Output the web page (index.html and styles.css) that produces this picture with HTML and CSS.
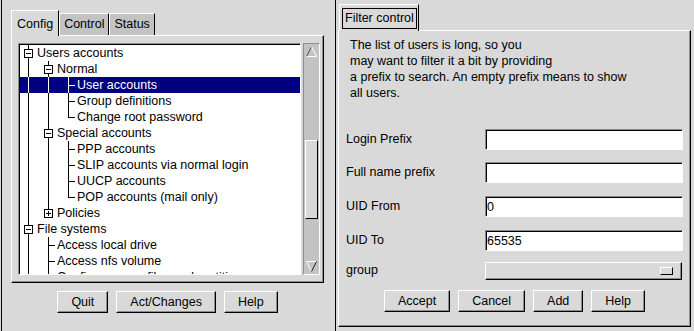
FILE: index.html
```html
<!DOCTYPE html>
<html>
<head>
<meta charset="utf-8">
<title>User accounts</title>
<link rel="stylesheet" href="styles.css">
</head>
<body>
<div class="app">
	<div class="left">
		<div class="tabs">
			<div class="tab active">Config</div>
			<div class="tab">Control</div>
			<div class="tab">Status</div>
		</div>
		<div class="nb-body">
			<div class="list">
				<div class="row"><i class="c ud"><b class="box minus"></b></i><span class="txt">Users accounts</span></div>
				<div class="row"><i class="c v"></i><i class="c ud"><b class="box minus"></b></i><span class="txt">Normal</span></div>
				<div class="row sel"><i class="c v"></i><i class="c v"></i><i class="c t"></i><span class="txt">User accounts</span></div>
				<div class="row"><i class="c v"></i><i class="c v"></i><i class="c t"></i><span class="txt">Group definitions</span></div>
				<div class="row"><i class="c v"></i><i class="c v"></i><i class="c l"></i><span class="txt">Change root password</span></div>
				<div class="row"><i class="c v"></i><i class="c ud"><b class="box minus"></b></i><span class="txt">Special accounts</span></div>
				<div class="row"><i class="c v"></i><i class="c v"></i><i class="c t"></i><span class="txt">PPP accounts</span></div>
				<div class="row"><i class="c v"></i><i class="c v"></i><i class="c t"></i><span class="txt">SLIP accounts via normal login</span></div>
				<div class="row"><i class="c v"></i><i class="c v"></i><i class="c t"></i><span class="txt">UUCP accounts</span></div>
				<div class="row"><i class="c v"></i><i class="c v"></i><i class="c l"></i><span class="txt">POP accounts (mail only)</span></div>
				<div class="row"><i class="c v"></i><i class="c u"><b class="box plus"></b></i><span class="txt">Policies</span></div>
				<div class="row"><i class="c ud"><b class="box minus"></b></i><span class="txt">File systems</span></div>
				<div class="row"><i class="c v"></i><i class="c t"></i><span class="txt">Access local drive</span></div>
				<div class="row"><i class="c v"></i><i class="c t"></i><span class="txt">Access nfs volume</span></div>
				<div class="row"><i class="c v"></i><i class="c t"></i><span class="txt">Configure swap files and partitions</span></div>
			</div>
			<div class="sb">
				<div class="arrow">
					<svg width="15" height="14" viewBox="0 0 15 14"><polyline points="2.5,12.5 7.5,2.5" fill="none" stroke="#555" stroke-width="1"/><polyline points="7.5,2.5 12.5,12.5 2.5,12.5" fill="none" stroke="#fff" stroke-width="1"/></svg>
				</div>
				<div class="trough"><div class="thumb"></div></div>
				<div class="arrow">
					<svg width="15" height="14" viewBox="0 0 15 14"><polyline points="7.5,11.5 2.5,1.5 12.5,1.5" fill="none" stroke="#fff" stroke-width="1"/><polyline points="12.5,1.5 7.5,11.5" fill="none" stroke="#222" stroke-width="1"/></svg>
				</div>
			</div>
		</div>
		<div class="btns">
			<button class="btn">Quit</button>
			<button class="btn">Act/Changes</button>
			<button class="btn">Help</button>
		</div>
	</div>

	<div class="right">
		<div class="rtab"><span class="focus">Filter control</span></div>
		<div class="rbody">
			<div class="desc">
				The list of users is long, so you<br>
				may want to filter it a bit by providing<br>
				a prefix to search. An empty prefix means to show<br>
				all users.
			</div>
			<div class="form">
				<label class="lbl">Login Prefix</label>
				<input class="field" type="text" value="">
				<label class="lbl">Full name prefix</label>
				<input class="field" type="text" value="">
				<label class="lbl">UID From</label>
				<input class="field" type="text" value="0">
				<label class="lbl">UID To</label>
				<input class="field" type="text" value="65535">
				<label class="lbl lbl-combo">group</label>
				<div class="combo"><span class="ind"></span></div>
			</div>
			<div class="btns rbtns">
				<button class="btn">Accept</button>
				<button class="btn">Cancel</button>
				<button class="btn">Add</button>
				<button class="btn">Help</button>
			</div>
		</div>
	</div>
</div>
</body>
</html>
```
FILE: styles.css
```css
body {
	margin:0;
	padding:0;
	background:#d9d9d9;
	color:#000;
	font:12.5px "Liberation Sans", Arial, sans-serif;}
.app {
	display:flex;
	width:694px;
	height:331px;
	overflow:hidden;}

/* left notebook */
.left {
	width:335px;
	margin-left:1px;
	box-sizing:border-box;
	border-left:1px solid #000;
	border-right:1px solid #000;
	padding:10px 0 0 9px;
	display:flex;
	flex-direction:column;}
.tabs {
	display:flex;
	align-items:flex-end;
	height:25px;}
.tab {
	height:22px;
	box-sizing:border-box;
	border:1px solid;
	border-color:#fff #000 transparent #fff;
	border-bottom:0;
	background:#c3c3c3;
	padding:0 4px;
	line-height:21px;
	white-space:nowrap;}
.tab.active {
	height:26px;
	margin-bottom:-1px;
	position:relative;
	z-index:1;
	padding:2px 5px 0;
	line-height:22px;
	background:#d9d9d9;}
.nb-body {
	width:313px;
	height:248px;
	box-sizing:border-box;
	border:1px solid;
	border-color:#fff #000 #000 #fff;
	box-shadow:inset -1px -1px 0 #8c8c8c;
	padding:7px 3px 7px 6px;
	display:flex;
	gap:2px;}
.list {
	flex:1;
	background:#fff;
	border:1px solid;
	border-color:#8c8c8c #fff #fff #8c8c8c;
	box-shadow:inset 1px 1px 0 #000;
	padding:1px 0 0 1px;
	overflow:hidden;}
.row {
	display:flex;
	height:16px;
	line-height:16px;
	white-space:nowrap;}
.row.sel {
	background:#000080;
	color:#fff;}
.txt {margin-left:-3px;}
.c {
	flex:none;
	width:20px;
	height:16px;
	display:flex;
	align-items:flex-start;}
.v {background:linear-gradient(currentColor,currentColor) 8px 0/1px 16px no-repeat;}
.t {background:linear-gradient(currentColor,currentColor) 8px 0/1px 16px no-repeat, linear-gradient(currentColor,currentColor) 8px 8px/7px 1px no-repeat;}
.l {background:linear-gradient(currentColor,currentColor) 8px 0/1px 9px no-repeat, linear-gradient(currentColor,currentColor) 8px 8px/7px 1px no-repeat;}
.ud {background:linear-gradient(currentColor,currentColor) 8px 0/1px 16px no-repeat;}
.u {background:linear-gradient(currentColor,currentColor) 8px 0/1px 5px no-repeat;}
.box {
	width:9px;
	height:9px;
	box-sizing:border-box;
	margin:4px 0 0 4px;
	border:1px solid #000;}
.box.minus {background:linear-gradient(#000,#000) center/5px 1px no-repeat, #fff;}
.box.plus {background:linear-gradient(#000,#000) center/5px 1px no-repeat, linear-gradient(#000,#000) center/1px 5px no-repeat, #fff;}

/* scrollbar */
.sb {
	width:17px;
	box-sizing:border-box;
	border:1px solid;
	border-color:#8c8c8c #fff #fff #8c8c8c;
	background:#c3c3c3;
	display:flex;
	flex-direction:column;}
.arrow {height:14px;}
.arrow svg {display:block;}
.trough {
	flex:1;
	padding:82px 0 0 1px;}
.thumb {
	width:13px;
	height:79px;
	box-sizing:border-box;
	background:#d9d9d9;
	border:1px solid;
	border-color:#fff #000 #000 #fff;}

/* buttons */
.btns {
	display:flex;
	justify-content:center;
	gap:8px;
	width:313px;
	margin-top:8px;}
.btn {
	height:22px;
	box-sizing:border-box;
	margin:0;
	padding:0 13px;
	border:1px solid;
	border-color:#fff #000 #000 #fff;
	box-shadow:inset -1px -1px 0 #8c8c8c;
	background:#d9d9d9;
	color:#000;
	font:inherit;
	line-height:19px;}

/* right notebook */
.right {
	margin-left:2px;
	padding-top:4px;
	display:flex;
	flex-direction:column;}
.rtab {
	width:80px;
	height:27px;
	box-sizing:border-box;
	margin:0 0 -1px 1px;
	position:relative;
	z-index:1;
	border:1px solid;
	border-color:#fff #000 transparent #fff;
	border-bottom:0;
	background:#d9d9d9;
	padding:3px 0 0 2px;}
.focus {
	display:block;
	width:75px;
	height:21px;
	box-sizing:border-box;
	border:1px solid #000;
	padding-left:2px;
	line-height:19px;
	white-space:nowrap;}
.rbody {
	width:353px;
	height:297px;
	box-sizing:border-box;
	border:1px solid;
	border-color:#fff #000 #000 #fff;
	box-shadow:inset -1px -1px 0 #8c8c8c;
	padding:6px 7px 0;}
.desc {
	padding-left:4px;
	line-height:16px;}
.form {
	display:grid;
	grid-template-columns:139px 198px;
	grid-template-rows:33px 34px 34px 32px 17px;
	margin-top:28px;}
.lbl {
	line-height:21px;}
.lbl-combo {line-height:17px;}
.field {
	width:198px;
	height:21px;
	box-sizing:border-box;
	margin:0;
	padding:0 0 0 1px;
	border:1px solid;
	border-color:#8c8c8c #fff #fff #8c8c8c;
	box-shadow:inset 1px 1px 0 #000;
	background:#fff;
	color:#000;
	font:inherit;
	outline:none;}
.combo {
	width:197px;
	height:18px;
	box-sizing:border-box;
	border:1px solid;
	border-color:#fff #000 #000 #fff;
	box-shadow:inset -1px -1px 0 #8c8c8c;
	display:flex;
	align-items:center;
	justify-content:flex-end;
	padding-right:8px;}
.ind {
	width:13px;
	height:8px;
	box-sizing:border-box;
	border:1px solid;
	border-color:#fff #000 #000 #fff;}
.rbtns {
	width:auto;
	margin-top:11px;}
```
